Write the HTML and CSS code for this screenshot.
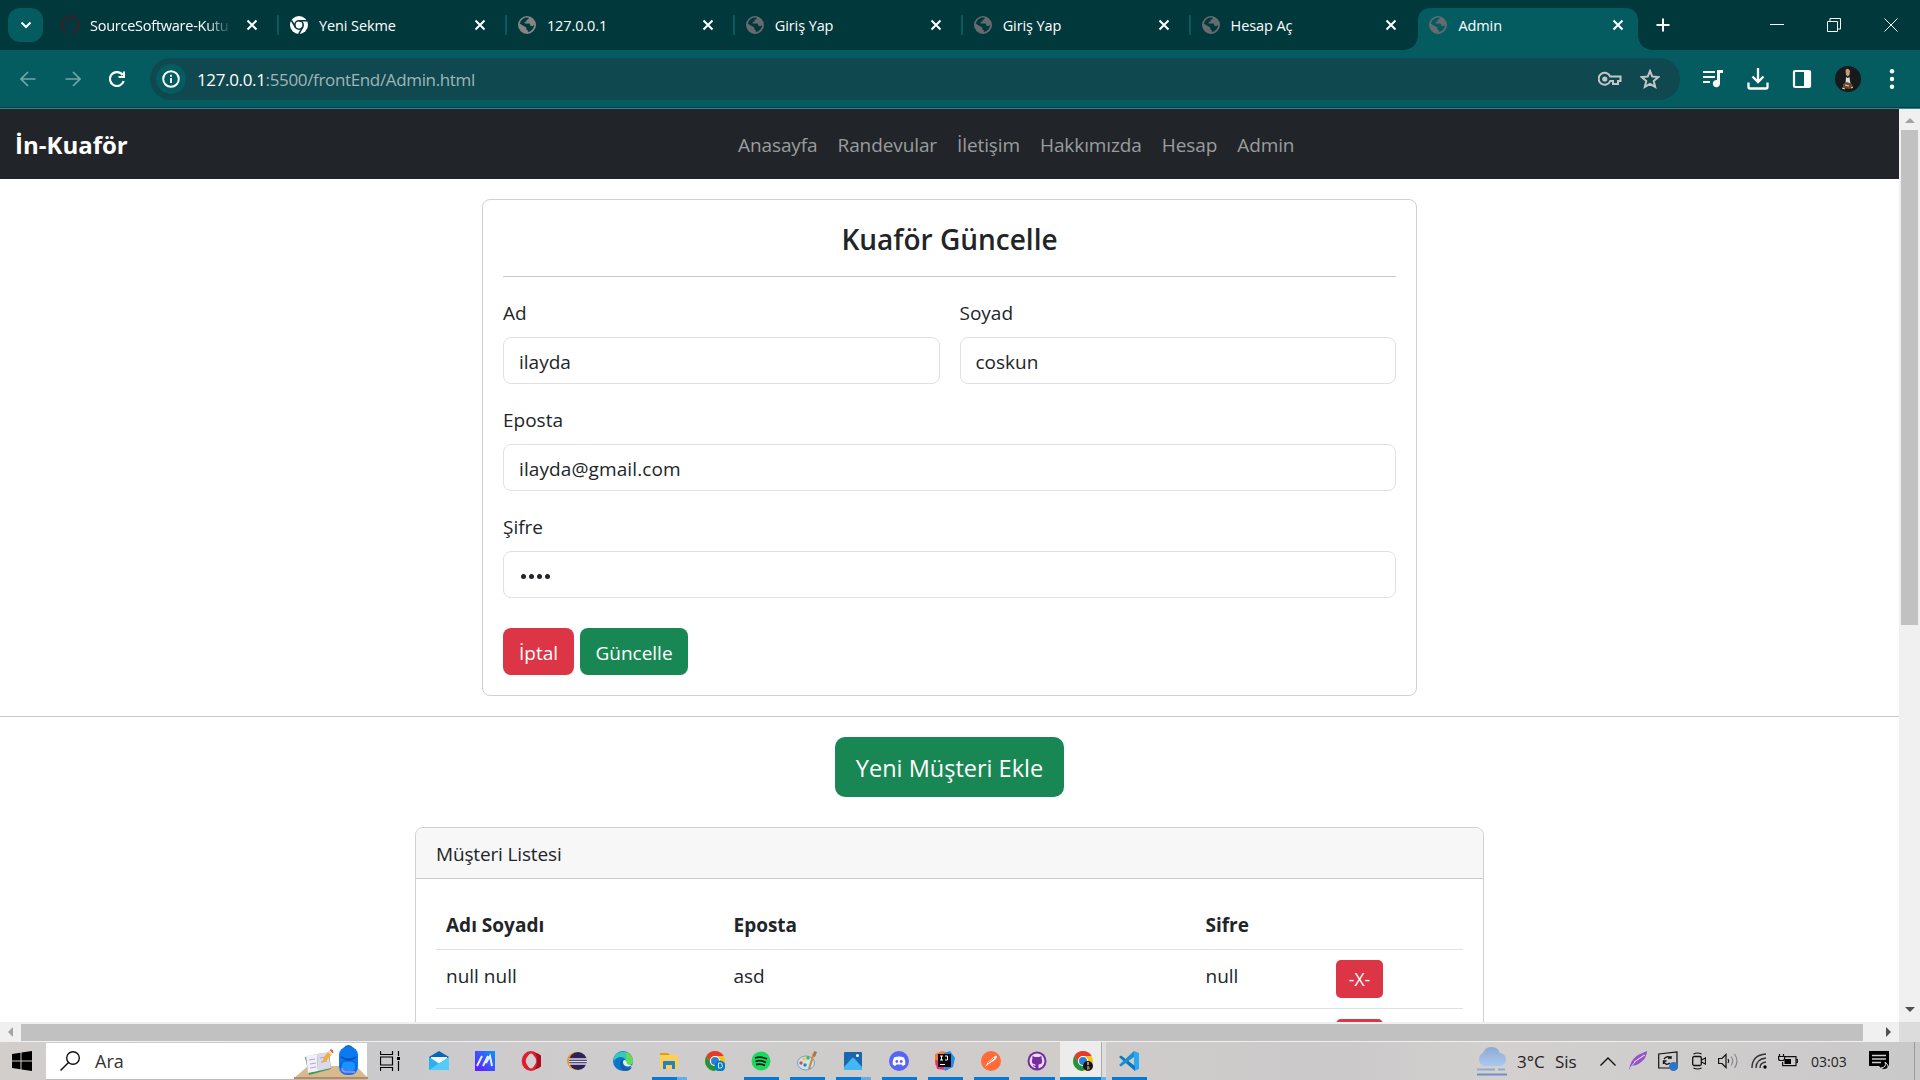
FILE: index.html
```html
<!DOCTYPE html>
<html lang="tr">
<head>
<meta charset="utf-8">
<title>Admin</title>
<link rel="stylesheet" href="styles.css">
</head>
<body>
<svg class="defs" aria-hidden="true">
  <defs>
    <symbol id="x" viewBox="0 0 12 12"><path d="M1.5 1.5l9 9M10.5 1.5l-9 9" stroke="currentColor" stroke-width="2" fill="none"/></symbol>
    <symbol id="globe" viewBox="0 0 18 18"><path fill="currentColor" fill-rule="evenodd" d="M9 0a9 9 0 100 18A9 9 0 009 0zm1.8 1.8c-.2 1.6-1 2-2.3 2v2H6.7v1.8h4.6c.9 0 1 .8 1 2.5h1.7c1 0 1.800-.6 2.100-1.500A7.200 7.200 0 019.800 16.100v-2c-1 0-1.500-.700-1.500-1.600v-1L1.900 7.700a7.300 7.300 0 018.900-5.900z"/></symbol>
    <symbol id="github" viewBox="0 0 16 16"><path fill="currentColor" d="M8 0C3.580 0 0 3.580 0 8c0 3.540 2.290 6.530 5.470 7.590.4.070.55-.17.55-.38 0-.19-.01-.82-.01-1.490-2.010.37-2.530-.49-2.690-.94-.09-.23-.48-.94-.82-1.130-.28-.15-.68-.52-.01-.53.63-.01 1.080.58 1.230.82.72 1.210 1.870.87 2.330.66.070-.52.28-.87.51-1.070-1.780-.2-3.640-.89-3.640-3.950 0-.87.31-1.590.82-2.150-.08-.2-.36-1.020.08-2.120 0 0 .67-.21 2.200.82.64-.18 1.320-.27 2-.27s1.360.09 2 .27c1.530-1.040 2.200-.82 2.200-.82.44 1.100.16 1.920.08 2.120.51.56.82 1.270.82 2.150 0 3.070-1.870 3.750-3.650 3.950.29.25.54.73.54 1.480 0 1.070-.01 1.930-.01 2.200 0 .21.15.46.55.38A8.010 8.010 0 0016 8c0-4.420-3.580-8-8-8z"/></symbol>
    <symbol id="chrome" viewBox="0 0 20 20"><circle cx="10" cy="10" r="10" fill="#fbc116"/><path d="M1.340 5A10 10 0 0118.660 5H10a5 5 0 00-4.500 7.200z" fill="#e33b2e"/><path d="M1.340 5A10 10 0 0010 20l4.300-7.500a5 5 0 01-8.600 0z" fill="#229342"/><circle cx="10" cy="10" r="5" fill="#fff"/><circle cx="10" cy="10" r="4" fill="#2a7de1"/></symbol>
  </defs>
</svg>

<div class="tabstrip">
  <div class="tab-search"><svg width="12" height="8" viewBox="0 0 12 8"><path d="M1.500 1.500L6 6l4.500-4.500" stroke="#fff" stroke-width="2" fill="none"/></svg></div>
  <div class="tabs">
    <div class="tab"><svg class="fav gh"><use href="#github"/></svg><span class="tab-title fade">SourceSoftware-Kutu</span><svg class="tab-close"><use href="#x"/></svg></div>
    <div class="tab"><svg class="fav" viewBox="0 0 18 18"><circle cx="9" cy="9" r="9" fill="#fff"/><g stroke="#00383c" stroke-width="1.600" fill="none"><circle cx="9" cy="9" r="4.200"/><path d="M9 4.800h8M5.400 11.200L1.500 4.500M12.700 11.200L8.800 18"/></g></svg><span class="tab-title">Yeni Sekme</span><svg class="tab-close"><use href="#x"/></svg></div>
    <div class="tab"><svg class="fav light"><use href="#globe"/></svg><span class="tab-title">127.0.0.1</span><svg class="tab-close"><use href="#x"/></svg></div>
    <div class="tab"><svg class="fav"><use href="#globe"/></svg><span class="tab-title">Giriş Yap</span><svg class="tab-close"><use href="#x"/></svg></div>
    <div class="tab"><svg class="fav"><use href="#globe"/></svg><span class="tab-title">Giriş Yap</span><svg class="tab-close"><use href="#x"/></svg></div>
    <div class="tab last"><svg class="fav"><use href="#globe"/></svg><span class="tab-title">Hesap Aç</span><svg class="tab-close"><use href="#x"/></svg></div>
    <div class="tab active"><svg class="fav"><use href="#globe"/></svg><span class="tab-title">Admin</span><svg class="tab-close"><use href="#x"/></svg></div>
  </div>
  <svg class="new-tab" width="14" height="14" viewBox="0 0 14 14"><path d="M7 .5v13M.5 7h13" stroke="#fff" stroke-width="2"/></svg>
  <div class="win-controls">
    <svg width="14" height="14" viewBox="0 0 14 14"><path d="M0 6.500h14" stroke="#fff"/></svg>
    <svg width="14" height="14" viewBox="0 0 14 14"><path d="M.5 3.500h10v10H.500zM3 3.500V.5h10.500v10.500H11" stroke="#fff" fill="none"/></svg>
    <svg width="14" height="14" viewBox="0 0 14 14"><path d="M.5.5l13 13M13.500.5l-13 13" stroke="#fff" fill="none"/></svg>
  </div>
</div>

<div class="toolbar">
  <svg class="nav-icon dim" viewBox="0 0 16 16"><path d="M15.500 8H1.500M8 1L1 8l7 7"/></svg>
  <svg class="nav-icon dim" viewBox="0 0 16 16"><path d="M.5 8h14M8 1l7 7-7 7"/></svg>
  <svg class="nav-icon" viewBox="0 0 16 16"><path d="M13.700 4A7 7 0 1014.700 10M15 .5V6H9.500"/></svg>
  <div class="omnibox">
    <div class="info"><svg width="18" height="18" viewBox="0 0 18 18"><circle cx="9" cy="9" r="7.800" stroke="#fff" stroke-width="2" fill="none"/><path d="M9 8v5M9 4.800v2" stroke="#fff" stroke-width="1.800"/></svg></div>
    <div class="url"><b>127.0.0.1</b>:5500/frontEnd/Admin.html</div>
    <svg class="key" width="24" height="16" viewBox="0 0 24 16"><g fill="none" stroke="#c3c6c9" stroke-width="2"><path d="M12.200 5.500A6 6 0 1012.200 10H15v3h5v-3h2.500V5.500z"/></g><circle cx="6.800" cy="8" r="2.600" fill="#c3c6c9"/></svg>
    <svg class="star" width="20" height="20" viewBox="0 0 20 20"><path d="M10 2l2.300 5.600 6 .5-4.600 3.900 1.500 5.900L10 14.800l-5.200 3.100 1.500-5.900L1.700 8.100l6-.5z" fill="none" stroke="#c3c6c9" stroke-width="2"/></svg>
  </div>
  <div class="actions">
    <svg class="a1" width="22" height="20" viewBox="0 0 22 20"><path d="M1 3h12M1 8h12M1 13h7" stroke="#fff" stroke-width="2.200"/><path d="M15 1h6v3h-3v10.500a3.600 3.600 0 11-3-3.500z" fill="#fff"/></svg>
    <svg class="a2" width="22" height="22" viewBox="0 0 22 22"><path d="M11 0v13M5.500 8.500L11 14l5.500-5.500M1.500 14.500v4.500q0 1.500 1.500 1.500h16q1.500 0 1.500-1.500v-4.500" fill="none" stroke="#fff" stroke-width="2.300"/></svg>
    <svg class="a3" width="20" height="20" viewBox="0 0 20 20"><rect x="2" y="2" width="16" height="16" rx="1" fill="none" stroke="#fff" stroke-width="2.200"/><path d="M12 2h6v16h-6z" fill="#fff"/></svg>
    <svg class="a4" width="26" height="26" viewBox="0 0 26 26"><circle cx="13" cy="13" r="13" fill="#17191a"/><path d="M10.500 4q2.500-3 4.500 1l-.5 4-1.700 1.500L11 9z" fill="#c79b7a"/><path d="M11 11l1.700 1L14.500 11l1 7h-5z" fill="#ddd"/><path d="M8 18l4-2 5 2 1 4-4 1-6-1z" fill="#70462d"/><path d="M10 19l4 1M7 22l3 1M16 22l2-1" stroke="#ddd"/></svg>
    <svg class="a5" width="6" height="20" viewBox="0 0 6 20"><g fill="#fff"><circle cx="3" cy="2.300" r="2.200"/><circle cx="3" cy="10" r="2.200"/><circle cx="3" cy="17.700" r="2.200"/></g></svg>
  </div>
</div>

<div class="viewport">
  <div class="page">
    <nav class="navbar">
      <div class="brand">İn-Kuaför</div>
      <div class="links"><a>Anasayfa</a><a>Randevular</a><a>İletişim</a><a>Hakkımızda</a><a>Hesap</a><a>Admin</a></div>
    </nav>
    <section class="card form-card">
      <h3>Kuaför Güncelle</h3>
      <hr>
      <div class="row">
        <div class="field"><label>Ad</label><div class="control">ilayda</div></div>
        <div class="field"><label>Soyad</label><div class="control">coskun</div></div>
      </div>
      <div class="field"><label>Eposta</label><div class="control mail">ilayda@gmail.com</div></div>
      <div class="field"><label>Şifre</label><div class="control password"><i></i><i></i><i></i><i></i></div></div>
      <div class="buttons"><div class="btn danger">İptal</div><div class="btn success">Güncelle</div></div>
    </section>
    <hr class="divider">
    <div class="btn success big">Yeni Müşteri Ekle</div>
    <section class="card list-card">
      <div class="card-header">Müşteri Listesi</div>
      <div class="table">
        <div class="tr th"><div>Adı Soyadı</div><div>Eposta</div><div>Sifre</div><div></div></div>
        <div class="tr"><div>null null</div><div>asd</div><div>null</div><div><div class="btn danger small">-X-</div></div></div>
        <div class="tr"><div></div><div></div><div></div><div><div class="btn danger small"></div></div></div>
      </div>
    </section>
  </div>
  <div class="vscroll">
    <svg width="10" height="5" viewBox="0 0 10 5"><path d="M5 0l5 5H0z" fill="#a3a3a3"/></svg>
    <div class="vthumb"></div>
    <svg class="down" width="10" height="5" viewBox="0 0 10 5"><path d="M5 5L0 0h10z" fill="#505050"/></svg>
  </div>
  <div class="hscroll">
    <svg width="5" height="10" viewBox="0 0 5 10"><path d="M0 5l5-5v10z" fill="#a3a3a3"/></svg>
    <div class="hthumb"></div>
    <svg width="5" height="10" viewBox="0 0 5 10"><path d="M5 5L0 0v10z" fill="#505050"/></svg>
  </div>
  <div class="corner"></div>
</div>

<div class="taskbar">
  <div class="start"><svg width="20" height="20" viewBox="0 0 20 20"><path d="M0 3l8.500-1.300v7.800H0zM9.500 1.500L20 0v9.500H9.500zM0 10.500h8.500v7.800L0 17zM9.500 10.500H20V20L9.500 18.500z"/></svg></div>
  <div class="search">
    <svg width="20" height="20" viewBox="0 0 20 20"><circle cx="13" cy="7" r="6.300" fill="none" stroke="#111" stroke-width="1.400"/><path d="M8.500 11.500L.5 19.500" stroke="#111" stroke-width="1.500"/></svg>
    <span>Ara</span>
    <svg class="art" width="74" height="36" viewBox="0 0 74 36">
      <path d="M0 35L14 23h48l12 12v1H0z" fill="#d9b98e"/><path d="M0 34h74v2H0z" fill="#b58c60"/>
      <path d="M11 14l12-3 12-1 2 16-22 6z" fill="#3c9a55"/><path d="M12 13l11-2 1 17-10 2z" fill="#f2eefa"/><path d="M23 11l11-2 3 16-13 3z" fill="#dcd8ea"/><path d="M15 17l6-1M16 21l6-1M16 25l6-1M26 15l6-1M27 19l6-1" stroke="#999cc0" stroke-width=".8"/>
      <path d="M28 20l2-6 5-6 3 3-6 7z" fill="#f5ad35"/><path d="M34 9l2-2 3 3-2 2z" fill="#e9e3dd"/><path d="M36 7q3-1 3 3z" fill="#ee5c4c" stroke="#ee5c4c"/>
      <path d="M50 6q4-6 9 0" fill="none" stroke="#1767ba" stroke-width="2"/><rect x="45" y="4" width="19" height="28" rx="8" fill="#0c79f3"/><path d="M47 14q8 5 15 0" fill="none" stroke="#0655bd" stroke-width="2"/><rect x="47" y="18" width="15" height="11" rx="5" fill="#1b93ff" stroke="#0756c4"/><path d="M48 25q0 4 4 4h9" fill="none" stroke="#c58cff" stroke-width="1.500"/>
    </svg>
  </div>
  <div class="taskview"><svg width="20" height="20" viewBox="0 0 20 20"><path d="M.5 0v3.500h12V0M.5 20v-3.500h12V20M.5 6h12v8H.5zM18.500 0v5M18.500 10v10" fill="none" stroke="#000" stroke-width="1.200"/><path d="M17 6h3v3h-3z"/></svg></div>
  <div class="apps">
    <div class="app"><svg viewBox="0 0 20 20"><path d="M0 6L10 0l10 6v4H0z" fill="#0867b4"/><path d="M2 6h16v6l-8 5-8-5z" fill="#f5f8fb"/><path d="M0 6l10 6.500L20 6v13H0z" fill="#2bb0ee"/><path d="M0 19L20 6v13z" fill="#55ccf7"/></svg></div>
    <div class="app"><svg viewBox="0 0 20 20"><defs><linearGradient id="va" x2="1" y2="0" y1="1"><stop stop-color="#6d13ff"/><stop offset="1" stop-color="#0794ff"/></linearGradient></defs><path d="M0 0h20v20H0z" fill="url(#va)"/><path d="M2 15L7 5M8 15l5-10M11 12l4-7 2 10" fill="none" stroke="#e9ebff" stroke-width="2"/></svg></div>
    <div class="app"><svg viewBox="0 0 20 20"><ellipse cx="10" cy="10" rx="7.300" ry="8" fill="none" stroke="#df1e30" stroke-width="4"/><ellipse cx="10" cy="10" rx="4" ry="7.500" fill="#d4d1d2"/><path d="M14 2a8 8 0 010 16c3-4 3-12 0-16z" fill="#a60d20"/></svg></div>
    <div class="app"><svg viewBox="0 0 20 20"><circle cx="9" cy="10" r="9" fill="#f39329"/><circle cx="11" cy="10" r="9" fill="#2c2255"/><path d="M2 8h18M2 10.500h18M2 13h18" stroke="#dedbeb" stroke-width="1.500"/></svg></div>
    <div class="app"><svg viewBox="0 0 20 20"><circle cx="10" cy="10" r="10" fill="#0b76ce"/><path d="M1 6C5-2 18-1 20 9c0 4-3 6-6 5-4-1 0-3-2-6S4 5 1 10z" fill="#35c9bb"/><path d="M13 1c5 2 7 5 7 9s-4 5-7 3z" fill="#67d85b"/><path d="M12 8c-4 2-3 8 2 9 2 .5 4 0 5-1-2 5-9 5-11 1S7 8 12 8z" fill="#155ba9"/><path d="M10 11c0-2 2-3 3-1s0 4 6 4c-4 3-9 1-9-3z" fill="#e4eef1"/></svg></div>
    <div class="app run more"><svg viewBox="0 0 20 20"><path d="M1 2h8l2 2h-2v3H1z" fill="#e29c13"/><path d="M1 4h18v14H1z" fill="#fad155"/><path d="M4 18v-7q0-1 1-1h10q1 0 1 1v7h-3v-4H7v4z" fill="#2381c7"/></svg></div>
    <div class="app"><svg viewBox="0 0 20 20"><use href="#chrome"/><circle cx="15" cy="15" r="5.500" fill="#087cc1"/><path d="M13.500 12h2q2 0 1.500 1.500 1.500 3-1 3.500h-2.500z" fill="none" stroke="#cceaff"/></svg></div>
    <div class="app run"><svg viewBox="0 0 20 20"><circle cx="10" cy="10" r="9.500" fill="#1ed760"/><path d="M4 7q6-2 12 1M4.500 10.500q5-2 10.500 1M5 13.500q5-1 9 1" fill="none" stroke="#10201a" stroke-width="1.800"/></svg></div>
    <div class="app run"><svg viewBox="0 0 20 20"><ellipse cx="9" cy="12" rx="8.500" ry="7" fill="#c8e5f3" stroke="#72a2bc"/><circle cx="4" cy="12" r="1.700" fill="#df4d40"/><circle cx="7" cy="8" r="1.700" fill="#f8c637"/><circle cx="11" cy="7" r="1.700" fill="#55ae44"/><circle cx="8" cy="14" r="1.700" fill="#367dc3"/><path d="M17 2l-5 16" stroke="#d48a37" stroke-width="2.200"/><path d="M16 5l1-5 3 1-2 5z" fill="#a9754c"/></svg></div>
    <div class="app run more"><svg viewBox="0 0 20 20"><rect x="1" y="1" width="18" height="18" rx="1" fill="#1b65ab"/><path d="M1 16L9 7q1-1 2 0l8 9v2q0 1-1 1H1z" fill="#43b7f1"/><path d="M11 7q-1-1-2 0L1 16V8l6-5 6 6z" fill="#1f6fb8" opacity=".3"/><circle cx="14.500" cy="4.500" r="1.500" fill="#fff"/></svg></div>
    <div class="app run"><svg viewBox="0 0 20 20"><circle cx="10" cy="10" r="10" fill="#5865f2"/><path d="M5 6.500Q10 4.500 15 6.500q2 4 1.300 7l-2.300 1.500-1.500-1.500h-5L6 15l-2.300-1.500Q3 10.500 5 6.500z" fill="#fff"/><circle cx="7.800" cy="10.500" r="1.400" fill="#5865f2"/><circle cx="12.200" cy="10.500" r="1.400" fill="#5865f2"/></svg></div>
    <div class="app run"><svg viewBox="0 0 20 20"><path d="M0 3l7-3 7 2-7 15-7-3z" fill="#f77b35"/><path d="M0 9l8 1 2 9-8-1z" fill="#e72c84"/><path d="M9 2l6-2 5 7-2 9-8 4z" fill="#168ff0"/><path d="M3 3h13v13H3z" fill="#090909"/><path d="M5 5h3M6.500 5v4M5 9h3M10 5h2.500v4H10M5 13.500h5" fill="none" stroke="#fff"/></svg></div>
    <div class="app run"><svg viewBox="0 0 20 20"><circle cx="10" cy="10" r="10" fill="#ff6c37"/><path d="M4 16l3-5 7-6q2-1 2 1-1 3-7 6z" fill="#fff"/><path d="M7 12l6-5" stroke="#ff6c37"/></svg></div>
    <div class="app run"><svg viewBox="0 0 20 20"><circle cx="10" cy="10" r="9.500" fill="#752da0"/><circle cx="10" cy="10" r="7.500" fill="#eadff0"/><path d="M5.500 5l2.500 1h4l2.500-1 .2 3q2 5-3.200 5.500v4.500h-3v-2q-2 0-3-2 1 0 2 .8h1V13.500Q3.500 13 5.300 8z" fill="#752da0"/></svg></div>
    <div class="app run current"><svg viewBox="0 0 20 20"><use href="#chrome"/><circle cx="15" cy="15" r="5" fill="#151515"/><path d="M14 11h2v3h-2z" fill="#b48c6d"/><path d="M14 15h2l1 3-3 1z" fill="#9a7860"/></svg></div>
    <div class="app run"><svg viewBox="0 0 20 20"><path d="M15 0l5 2v16l-5 2z" fill="#29a9f2"/><path d="M0 6l2-1.500L16 15v5z" fill="#0878bd"/><path d="M0 14L15 0v6L2 15.500z" fill="#168fd5"/></svg></div>
  </div>
  <div class="tray">
    <svg class="weather" width="30" height="29" viewBox="0 0 30 29"><defs><linearGradient id="cl" y2="1" x2="0"><stop stop-color="#8eacd3"/><stop offset="1" stop-color="#a9c7ef"/></linearGradient></defs><path d="M7 19a7 7 0 01-1-13 9 9 0 0117 0 6.500 6.500 0 01-1 13z" fill="url(#cl)"/><path d="M0 22.500h18M21 22.500h7" stroke="#8fabd3" stroke-width="2"/><path d="M0 27.500h30" stroke="#6b91c5" stroke-width="2"/></svg>
    <span class="temp">3°C</span><span class="cond">Sis</span>
    <svg class="t1" width="16" height="9" viewBox="0 0 16 9"><path d="M.5 8.500L8 1l7.500 7.500" fill="none" stroke="#111" stroke-width="1.400"/></svg>
    <svg class="t2" width="18" height="20" viewBox="0 0 18 20"><path d="M0 19Q1 9 9 4l9-4q0 7-7 12-4 3-8 3z" fill="#9453c8"/><path d="M1 17Q6 9 15 4M5 11L16 4" stroke="#dfc6f3" fill="none"/></svg>
    <svg class="t3" width="20" height="20" viewBox="0 0 20 20"><path d="M.7 3L19 1v16H.7z" fill="none" stroke="#111" stroke-width="1.200"/><path d="M6 8q3-4 7-1V5M13 7h-3M5.500 13v-3h3M6 11q2 4 6 1" fill="none" stroke="#111" stroke-width="1.300"/><circle cx="15.500" cy="15.500" r="4.500" fill="#2976c6"/></svg>
    <svg class="t4" width="14" height="18" viewBox="0 0 14 18"><rect x=".7" y="4.500" width="8.600" height="9" rx="1.500" fill="none" stroke="#111" stroke-width="1.300"/><path d="M9.500 8l4-2v6l-4-2M1.500 2q4-2 8 0M1.500 16q4 2 8 0" fill="none" stroke="#111" stroke-width="1.200"/></svg>
    <svg class="t5" width="20" height="18" viewBox="0 0 20 18"><path d="M.6 6.500H4L8 2.500v13l-4-4H.6zM10 7q1.500 2 0 4" fill="none" stroke="#111" stroke-width="1.200"/><path d="M13 4.500q3.500 4.500 0 9M16.500 2q5 7 0 14" fill="none" stroke="#888" stroke-width="1.200"/></svg>
    <svg class="t6" width="16" height="16" viewBox="0 0 16 16"><path d="M1 15Q1 2 15 1M5 15Q5 6 15 5M9 15Q9 9.500 15 9" fill="none" stroke="#333" stroke-width="1.400"/><circle cx="14" cy="14" r="1.700"/></svg>
    <svg class="t7" width="20" height="14" viewBox="0 0 20 14"><path d="M6 2.600h12v9H4.600V8M18.500 5.500h1v3h-1M1.500 0v2M5.500 0v2M.6 2.500h6v2q0 2-2 2H2.500q-2 0-2-2z" fill="none" stroke="#111" stroke-width="1.200"/><path d="M6.500 5H13v5H6.500z"/></svg>
    <span class="clock">03:03</span>
    <svg class="t8" width="20" height="20" viewBox="0 0 20 20"><path d="M0 0h20v15h-4l-3 3-3-3H0z"/><path d="M3 4.500h14M3 8h14M3 11.500h9" stroke="#d0cecf" stroke-width="1.300"/><path d="M16 11q2 5-4 6 2 3 6 1 3-3-2-7z" fill="#111" stroke="#ddd"/></svg>
    <div class="peek"></div>
  </div>
</div>
</body>
</html>
```
FILE: styles.css
```css
* { box-sizing: border-box; }
body { margin: 0; width: 1920px; height: 1080px; overflow: hidden; display: flex; flex-direction: column; font-family: "Open Sans", "Noto Sans", sans-serif; font-size: 19px; color: #212529; background: #fff; }
svg { display: block; flex: none; }
.defs { position: absolute; width: 0; height: 0; }

/* Browser tabs */
.tabstrip { height: 50px; flex: none; background: #00383c; display: flex; align-items: flex-start; padding-left: 8px; }
.tab-search { margin-top: 8px; width: 35px; height: 34px; border-radius: 12px; background: #045c61; display: flex; align-items: center; justify-content: center; }
.tabs { display: flex; margin-left: 8px; height: 50px; }
.tab { width: 227.900px; height: 34px; margin-top: 8px; padding: 0 19px 0 11px; display: flex; align-items: center; color: #fff; font-size: 14.500px; border-right: 2px solid #045c61; background-clip: padding-box; }
.tab:not(.active) { height: 20px; margin-top: 15px; }
.tab:first-child { width: 228px; padding-left: 9px; }
.tab.last { border-right-color: transparent; }
.fav { width: 18px; height: 18px; margin-right: 11px; color: #666b70; }
.fav.light { color: #858585; }
.fav.gh { width: 20px; height: 20px; margin-right: 10px; color: #24292f; }
.tab-title { flex: 1; white-space: nowrap; overflow: hidden; letter-spacing: -.1px; }
.fade { margin-right: 14px; letter-spacing: -.25px; -webkit-mask-image: linear-gradient(90deg, #000 82%, transparent); mask-image: linear-gradient(90deg, #000 82%, transparent); }
.tab-close { width: 12px; height: 12px; }
.tab.active { position: relative; width: 220px; height: 42px; padding-bottom: 8px; padding-right: 14px; background: #045c61; border: 0; border-radius: 12px 12px 0 0; }
.tab.active::before, .tab.active::after { content: ""; position: absolute; bottom: 0; width: 14px; height: 14px; }
.tab.active::before { left: -14px; background: radial-gradient(circle at 0 0, transparent 13.500px, #045c61 14px); }
.tab.active::after { right: -14px; background: radial-gradient(circle at 100% 0, transparent 13.500px, #045c61 14px); }
.new-tab { margin: 18px 0 0 18px; }
.win-controls { margin: 18px 22px 0 auto; display: flex; gap: 43px; }

/* Toolbar */
.toolbar { height: 59px; flex: none; background: #045c61; border-bottom: 1px solid #3c8387; box-shadow: inset 0 -1px #034347; display: flex; align-items: center; padding-left: 20px; }
.nav-icon { width: 16px; height: 16px; margin-right: 28.500px; fill: none; stroke: #fff; stroke-width: 2.200; }
.nav-icon.dim { stroke: #72a5a8; stroke-width: 1.700; }
.omnibox { width: 1530px; height: 42px; margin-left: -3.500px; border-radius: 21px; background: #0f484f; display: flex; align-items: center; padding: 0 20px 0 6px; }
.info { width: 30px; height: 30px; border-radius: 50%; background: #045c61; display: flex; align-items: center; justify-content: center; }
.url { margin-left: 11px; flex: 1; font-size: 17px; color: #9fb6b9; letter-spacing: -.35px; }
.url b { font-weight: 400; color: #fff; }
.key { margin-right: 18px; }
.actions { flex: 1; display: flex; align-items: center; }
.a1 { margin-left: 22px; }
.a2 { margin-left: 22.500px; }
.a3 { margin-left: 23.500px; }
.a4 { margin-left: 23px; }
.a5 { margin-left: 28px; }

/* Page viewport */
.viewport { height: 933px; flex: none; display: grid; grid-template-columns: 1899px 21px; grid-template-rows: 913px 20px; }
.page { overflow: hidden; background: #fff; }
.navbar { height: 70px; background: #212529; display: flex; align-items: center; padding-left: 15px; }
.brand { width: 723px; padding-top: 1px; color: #fff; font-weight: 700; font-size: 24px; }
.links { display: flex; gap: 20px; color: #9b9d9e; padding-top: 2px; letter-spacing: -.1px; }
.card { border: 1px solid #d0d1d2; border-radius: 8px; background: #fff; }
.form-card { width: 935px; height: 497px; margin: 20px 0 0 482px; padding: 20px; }
h3 { margin: 0; height: 36px; line-height: 39px; text-align: center; font-size: 28px; font-weight: 600; }
hr { margin: 20px 0; border: 0; height: 1px; background: #c8c9ca; }
.row { display: grid; grid-template-columns: 1fr 1fr; gap: 20px; }
.field { height: 107px; }
label { display: block; height: 40px; line-height: 33px; }
.control { height: 47px; border: 1px solid #dee2e6; border-radius: 8px; padding: 2px 15px 0; display: flex; align-items: center; }
.mail { letter-spacing: .1px; }
.password { gap: 3px; padding: 4px 15px 0 17px; }
.password i { width: 5px; height: 5px; border-radius: 50%; background: #212529; }
.buttons { display: flex; gap: 6px; margin-top: 10px; }
.btn { height: 47px; border-radius: 8px; color: #fff; display: flex; align-items: center; justify-content: center; padding-top: 2px; }
.danger { background: #dc3545; width: 71px; }
.success { background: #198754; width: 108px; }
.divider { margin: 20px 0 20px; }
.btn.big { width: 229px; height: 60px; border-radius: 10px; margin-left: 835px; font-size: 23.500px; }
.list-card { width: 1069px; height: 400px; margin: 30px 0 0 415px; }
.card-header { height: 51px; padding: 1px 20px 0; line-height: 51px; background: #f7f7f7; border-bottom: 1px solid #c9cacb; border-radius: 8px 8px 0 0; letter-spacing: -.15px; }
.table { margin: 20px 20px 0; }
.tr { display: grid; grid-template-columns: 287.500px 472px 130.500px 1fr; height: 59px; border-bottom: 1px solid #dee2e6; }
.tr > div { padding: 10px 10px 0; line-height: 33px; }
.tr.th { height: 51px; font-weight: 700; }
.btn.small { width: 47px; height: 38px; border-radius: 5px; font-size: 17.500px; padding-top: 0; }

/* Page scrollbars */
.vscroll { background: #f0f0f0; display: flex; flex-direction: column; align-items: center; padding-top: 9px; }
.vthumb { width: 17px; height: 495px; margin-top: 7px; background: #c1c1c1; }
.down { margin: auto 0 10px; }
.hscroll { background: #f0f0f0; display: flex; align-items: center; padding-left: 8px; }
.hthumb { width: 1842px; height: 17px; margin: 0 23px 0 8px; background: #c1c1c1; }
.corner { background: #dcdcdc; }

/* Taskbar */
.taskbar { height: 38px; flex: none; display: flex; background: linear-gradient(90deg, #d2cecc, #cac9cb 18%, #cecccd 30%, #cfccca 55%, #ccc9cb 70%, #d3d0cf 78%, #cac9c9); }
.start { width: 46px; display: flex; align-items: center; justify-content: center; padding-right: 2px; }
.search { width: 321px; height: 37px; margin-top: 1px; border-bottom: 1px solid #bbb; background: #fff; display: flex; align-items: center; padding-left: 14px; font-size: 18px; color: #333; }
.search span { margin-left: 15px; }
.art { margin-left: auto; margin-right: -1px; }
.taskview { width: 49px; display: flex; align-items: center; justify-content: center; padding-right: 3px; }
.apps { display: flex; }
.app { width: 46px; display: flex; flex-direction: column; align-items: center; padding-top: 9px; }
.app > svg { width: 20px; height: 20px; }
.app::after { content: ""; width: 35px; height: 3px; margin-top: 6px; }
.run::after { background: #0679d7; }
.more::after { background: linear-gradient(90deg, #0679d7 25px, #66ade6 25px); }
.current { background: linear-gradient(90deg, #ececec 41px, #aaa 41px 42px, #dededf 42px); }
.current::after { width: 46px; background: linear-gradient(90deg, #0679d7 41px, #66ade6 41px); }
.tray { flex: 1; display: flex; align-items: center; padding-left: 325px; font-size: 17px; color: #222; }
.temp { width: 38px; margin-left: 10px; }
.cond { width: 45px; }
.t2 { margin-left: 13px; }
.t3 { margin-left: 11px; }
.t4 { margin-left: 14px; }
.t5 { margin-left: 12px; }
.t6 { margin-left: 13px; }
.t7 { margin-left: 11px; }
.clock { width: 58px; margin-left: 13px; font-size: 14px; }
.peek { width: 1px; height: 38px; margin-left: 25px; background: #999; }
```
